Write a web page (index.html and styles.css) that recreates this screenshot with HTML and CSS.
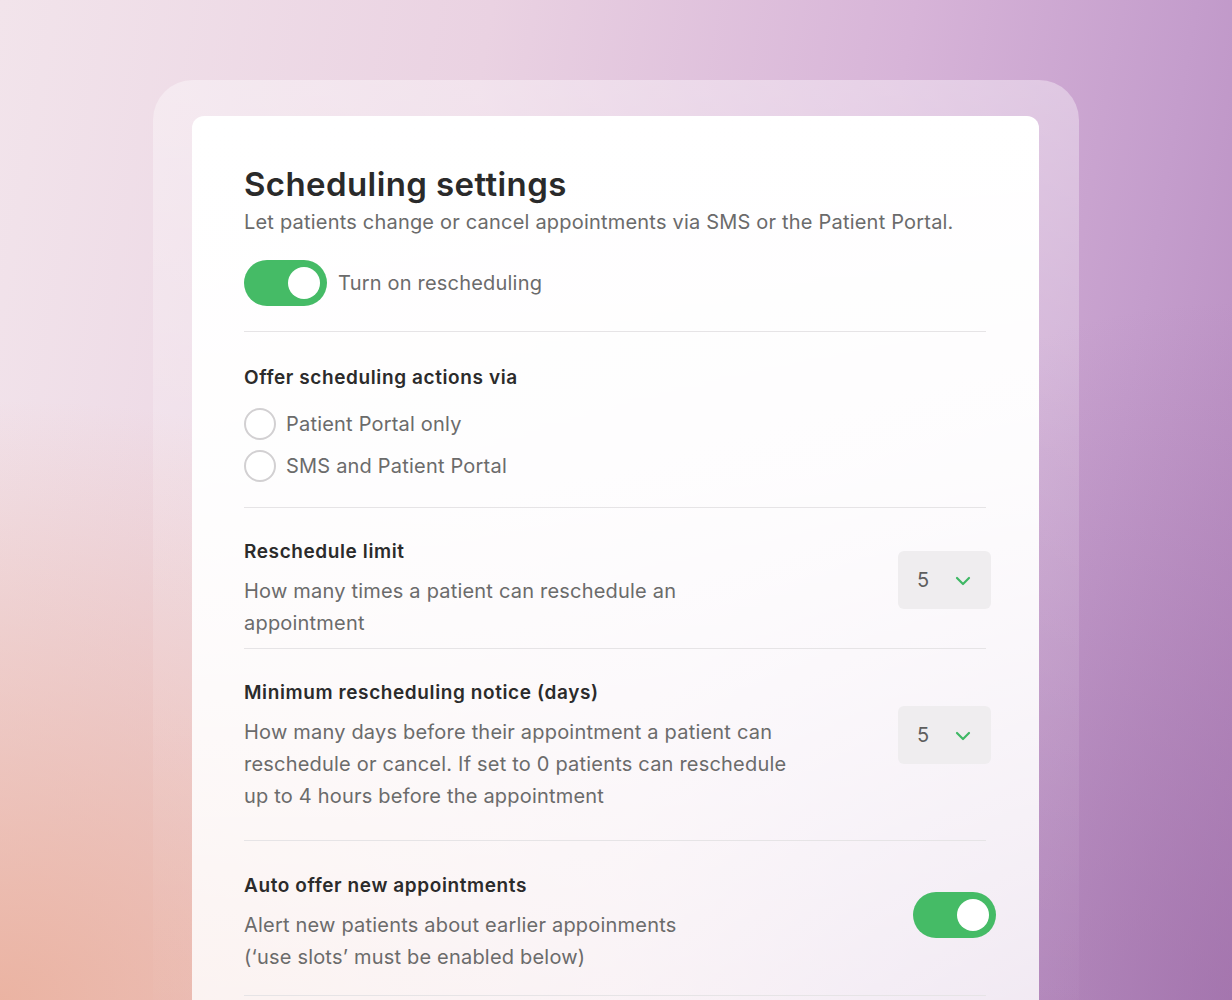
FILE: index.html
```html
<!DOCTYPE html>
<html lang="en">
<head>
<meta charset="utf-8">
<title>Scheduling settings</title>
<link rel="stylesheet" href="styles.css">
</head>
<body>
<div class="stage">
  <div class="frame">
    <div class="card">
      <section class="intro">
        <h1 class="title">Scheduling settings</h1>
        <p class="subtitle">Let patients change or cancel appointments via SMS or the Patient Portal.</p>
        <div class="toggle-line">
          <span class="switch"><span class="knob"></span></span>
          <span class="toggle-label">Turn on rescheduling</span>
        </div>
      </section>

      <section class="block channels">
        <h2 class="heading">Offer scheduling actions via</h2>
        <div class="radios">
          <label class="radio-line"><span class="radio"></span><span class="radio-label">Patient Portal only</span></label>
          <label class="radio-line"><span class="radio"></span><span class="radio-label">SMS and Patient Portal</span></label>
        </div>
      </section>

      <section class="block row row-limit">
        <div class="text">
          <h2 class="heading">Reschedule limit</h2>
          <p class="desc">How many times a patient can reschedule an appointment</p>
        </div>
        <div class="select"><span class="value">5</span>
          <svg class="chev" width="16" height="10" viewBox="0 0 16 10"><path d="M2 2 L8 8 L14 2" fill="none" stroke="#3fb865" stroke-width="2.2" stroke-linecap="round" stroke-linejoin="round"/></svg>
        </div>
      </section>

      <section class="block row row-notice">
        <div class="text">
          <h2 class="heading">Minimum rescheduling notice (days)</h2>
          <p class="desc">How many days before their appointment a patient can reschedule or cancel. If set to 0 patients can reschedule up to 4 hours before the appointment</p>
        </div>
        <div class="select"><span class="value">5</span>
          <svg class="chev" width="16" height="10" viewBox="0 0 16 10"><path d="M2 2 L8 8 L14 2" fill="none" stroke="#3fb865" stroke-width="2.2" stroke-linecap="round" stroke-linejoin="round"/></svg>
        </div>
      </section>

      <section class="block row row-auto">
        <div class="text">
          <h2 class="heading">Auto offer new appointments</h2>
          <p class="desc">Alert new patients about earlier appoinments<br>(‘use slots’ must be enabled below)</p>
        </div>
        <span class="switch switch-right"><span class="knob"></span></span>
      </section>
    </div>
  </div>
</div>
</body>
</html>
```

FILE: styles.css
```css
* { box-sizing: border-box; }
html, body { margin: 0; padding: 0; height: 100%; overflow: hidden; }
body {
  font-family: "Inter", "Liberation Sans", sans-serif;
  background:
    radial-gradient(ellipse 70% 60% at 0% 100%, rgba(234, 172, 150, 0.85), rgba(234, 172, 150, 0) 100%),
    radial-gradient(ellipse 50% 70% at 100% 100%, rgba(150, 100, 160, 0.55), rgba(150, 100, 160, 0) 100%),
    linear-gradient(100deg, #f2e4eb 0%, #ead2e2 35%, #d7b4d8 65%, #c49dcc 85%, #b68bbf 100%);
}
.stage {
  display: flex;
  justify-content: center;
  padding-top: 80px;
  height: 1000px;
  overflow: hidden;
}
.frame {
  width: 926px;
  padding: 36px 40px 0 39px;
  border-radius: 40px 40px 0 0;
  background: linear-gradient(to bottom, rgba(255, 255, 255, 0.38) 0%, rgba(255, 255, 255, 0.18) 40%, rgba(255, 255, 255, 0.02) 100%);
}
.card {
  border-radius: 12px 12px 0 0;
  background: linear-gradient(to bottom, #ffffff 0%, rgba(255, 255, 255, 0.96) 40%, rgba(255, 255, 255, 0.82) 100%);
  padding: 0 48px 0 52px;
  height: 884px;
}
.intro {
  padding-top: 48px;
  padding-bottom: 25px;
  border-bottom: 1px solid #e6e4e6;
  margin-right: 5px;
}
.title {
  margin: 0;
  font-size: 33px;
  line-height: 40px;
  font-weight: 600;
  color: #2a2a2a;
  letter-spacing: 0.4px;
}
.subtitle {
  margin: 4px 0 0;
  font-size: 20px;
  line-height: 28px;
  color: #6b6b6b;
  letter-spacing: 0.2px;
}
.toggle-line {
  display: flex;
  align-items: center;
  gap: 11px;
  margin-top: 24px;
}
.toggle-label {
  font-size: 20px;
  color: #6b6b6b;
  letter-spacing: 0.2px;
}
.switch {
  position: relative;
  display: inline-block;
  width: 83px;
  height: 46px;
  border-radius: 23px;
  background: #45bb66;
  flex-shrink: 0;
}
.knob {
  position: absolute;
  top: 7px;
  right: 7px;
  width: 32px;
  height: 32px;
  border-radius: 50%;
  background: #ffffff;
}
.block {
  border-bottom: 1px solid #e6e4e6;
  margin-right: 5px;
}
.heading {
  margin: 0;
  font-size: 19px;
  line-height: 24px;
  font-weight: 600;
  color: #2b2b2b;
  letter-spacing: 0.6px;
}
.channels {
  padding-top: 34px;
  padding-bottom: 25px;
}
.radios {
  display: flex;
  flex-direction: column;
  gap: 10px;
  margin-top: 18px;
}
.radio-line {
  display: flex;
  align-items: center;
  gap: 10px;
}
.radio {
  width: 32px;
  height: 32px;
  border-radius: 50%;
  border: 2px solid #d2d0d2;
  background: #fff;
}
.radio-label {
  font-size: 20px;
  color: #6b6b6b;
  letter-spacing: 0.2px;
}
.row {
  display: flex;
  justify-content: space-between;
  align-items: center;
}
.text { max-width: 552px; }
.desc {
  margin: 11px 0 0;
  font-size: 20px;
  line-height: 32px;
  color: #6b6b6b;
  letter-spacing: 0.2px;
}
.row-limit { padding: 32px 0 9px; }
.row-notice { padding: 32px 0 28px; }
.row-auto { padding: 33px 0 22px; }
.select {
  width: 93px;
  height: 58px;
  border-radius: 6px;
  background: #efedef;
  display: flex;
  align-items: center;
  justify-content: space-between;
  padding: 0 20px 0 19px;
  margin-right: -5px;
  margin-bottom: 20px;
}
.row-notice .select { margin-bottom: 24px; }
.value {
  font-size: 20px;
  color: #5e5e5e;
}
.chev { margin-top: 2px; }
.switch-right {
  margin-right: -10px;
  margin-bottom: 17px;
}
```
